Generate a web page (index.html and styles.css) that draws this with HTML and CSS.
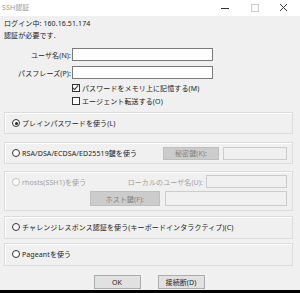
FILE: index.html
```html
<!doctype html>
<html lang="ja">
<head>
  <meta charset="utf-8">
  <title>SSH認証</title>
  <link rel="stylesheet" href="styles.css">
</head>
<body>
  <div class="window">
    <div class="titlebar">
      <span class="title">SSH認証</span>
      <div class="controls">
        <svg class="ctl" width="10" height="10" viewBox="0 0 10 10"><path d="M0 5.5h8" stroke="#333" stroke-width="1"/></svg>
        <svg class="ctl" width="10" height="10" viewBox="0 0 10 10"><rect x="1.5" y="1.5" width="7" height="7" fill="none" stroke="#ccc"/></svg>
        <svg class="ctl" width="10" height="10" viewBox="0 0 10 10"><path d="M1 1l7 7M8 1l-7 7" stroke="#333" stroke-width="1"/></svg>
      </div>
    </div>

    <div class="content">
      <div class="line first">ログイン中: 160.16.51.174</div>
      <div class="line">認証が必要です.</div>

      <div class="field user">
        <label>ユーザ名(N):</label>
        <span class="input"></span>
      </div>
      <div class="field pass">
        <label>パスフレーズ(P):</label>
        <span class="input"></span>
      </div>

      <div class="check c1"><span class="box checked"></span>パスワードをメモリ上に記憶する(M)</div>
      <div class="check c2"><span class="box"></span>エージェント転送する(O)</div>

      <div class="group g1">
        <div class="row"><span class="radio on"></span>プレインパスワードを使う(L)</div>
      </div>

      <div class="group g2">
        <div class="row">
          <span class="radio"></span>RSA/DSA/ECDSA/ED25519鍵を使う
          <span class="btn dis key">秘密鍵(K):</span>
          <span class="input dis keyfile"></span>
        </div>
      </div>

      <div class="group g3">
        <div class="row disabled">
          <span class="radio dim"></span>rhosts(SSH1)を使う
          <span class="local">ローカルのユーザ名(U):</span>
          <span class="input dis localuser"></span>
        </div>
        <div class="row r2">
          <span class="btn dis host">ホスト鍵(F):</span>
          <span class="input dis hostfile"></span>
        </div>
      </div>

      <div class="group g4">
        <div class="row"><span class="radio"></span>チャレンジレスポンス認証を使う(キーボードインタラクティブ)(C)</div>
      </div>

      <div class="group g5">
        <div class="row"><span class="radio"></span>Pageantを使う</div>
      </div>

      <div class="buttons">
        <span class="btn ok">OK</span>
        <span class="btn cancel">接続断(D)</span>
      </div>
    </div>
  </div>
</body>
</html>
```
FILE: styles.css
```css
html, body {
  margin: 0;
  background: #000;
}

.window {
  width: 300px;
  height: 290px;
  background: #f0f0f0;
  font-family: "Noto Sans", "Noto Sans CJK JP", sans-serif;
  font-size: 7px;
  letter-spacing: 0.1px;
  color: #222;
  overflow: hidden;
}

.titlebar {
  height: 16px;
  background: #fff;
  display: flex;
  align-items: center;
  justify-content: space-between;
}

.title {
  color: #999;
  padding-left: 2px;
  line-height: 16px;
}

.controls {
  display: flex;
  gap: 19px;
  padding-right: 11px;
}

.content {
  padding: 0 4px;
}

.line {
  height: 12px;
  line-height: 12px;
}

.line.first {
  margin-top: 2px;
}

.field {
  display: flex;
  align-items: center;
  height: 13px;
}

.field.user { margin-top: 6px; }
.field.pass { margin-top: 5px; }

.field label {
  width: 67px;
  text-align: right;
  padding-right: 1px;
}

.input {
  display: block;
  box-sizing: border-box;
  height: 13px;
  background: #fff;
  border: 1px solid #7a7a7a;
}

.field .input {
  width: 141px;
}

.input.dis {
  background: #f0f0f0;
  border-color: #cccccc;
}

.check {
  display: flex;
  align-items: center;
  height: 10px;
  padding-left: 68px;
  gap: 2px;
}

.check.c1 { margin-top: 4px; }
.check.c2 { margin-top: 3px; }

.box {
  width: 8px;
  height: 8px;
  box-sizing: border-box;
  border: 1px solid #333;
  background: #fff;
  position: relative;
}

.box.checked::after {
  content: "";
  position: absolute;
  left: 1px;
  top: -1px;
  width: 2px;
  height: 5px;
  border: solid #333;
  border-width: 0 1px 1px 0;
  transform: rotate(40deg);
}

.group {
  box-sizing: border-box;
  width: 289px;
  border: 1px solid #dcdcdc;
  box-shadow: inset 1px 1px 0 #fff;
  padding: 0 5px 0 7px;
}

.g1 { margin-top: 6px; height: 22px; }
.g2 { margin-top: 8px; height: 22px; }
.g3 { margin-top: 7px; height: 40px; }
.g4 { margin-top: 5px; height: 23px; }
.g5 { margin-top: 4px; height: 23px; }

.row {
  display: flex;
  align-items: center;
  height: 20px;
  gap: 2px;
  white-space: nowrap;
}

.g3 .row {
  height: 13px;
  margin-top: 3px;
}

.g3 .row.r2 {
  margin-top: 3px;
  height: 15px;
}

.disabled {
  color: #a0a0a0;
}

.radio {
  width: 8px;
  height: 8px;
  box-sizing: border-box;
  border: 1px solid #333;
  border-radius: 50%;
  background: #fff;
  position: relative;
}

.radio.on::after {
  content: "";
  position: absolute;
  left: 1.5px;
  top: 1.5px;
  width: 3px;
  height: 3px;
  border-radius: 50%;
  background: #222;
}

.radio.dim {
  border-color: #c0c0c0;
}

.btn {
  display: flex;
  align-items: center;
  justify-content: center;
  box-sizing: border-box;
  background: #e1e1e1;
  border: 1px solid #adadad;
  height: 14px;
}

.btn.dis {
  background: #cccccc;
  border-color: #bfbfbf;
  color: #838383;
}

.key {
  margin-left: auto;
  width: 56px;
  height: 13px;
}

.keyfile {
  width: 64px;
  margin-left: 2px;
}

.local {
  margin-left: auto;
  margin-right: 1px;
}

.localuser {
  width: 81px;
}

.host {
  margin-left: 78px;
  width: 70px;
  height: 15px;
}

.hostfile {
  width: 123px;
  height: 15px;
  margin-left: 3px;
}

.buttons {
  display: flex;
  justify-content: center;
  gap: 17px;
  margin-top: 9px;
  padding-right: 2px;
}

.buttons .btn {
  width: 47px;
}
```
